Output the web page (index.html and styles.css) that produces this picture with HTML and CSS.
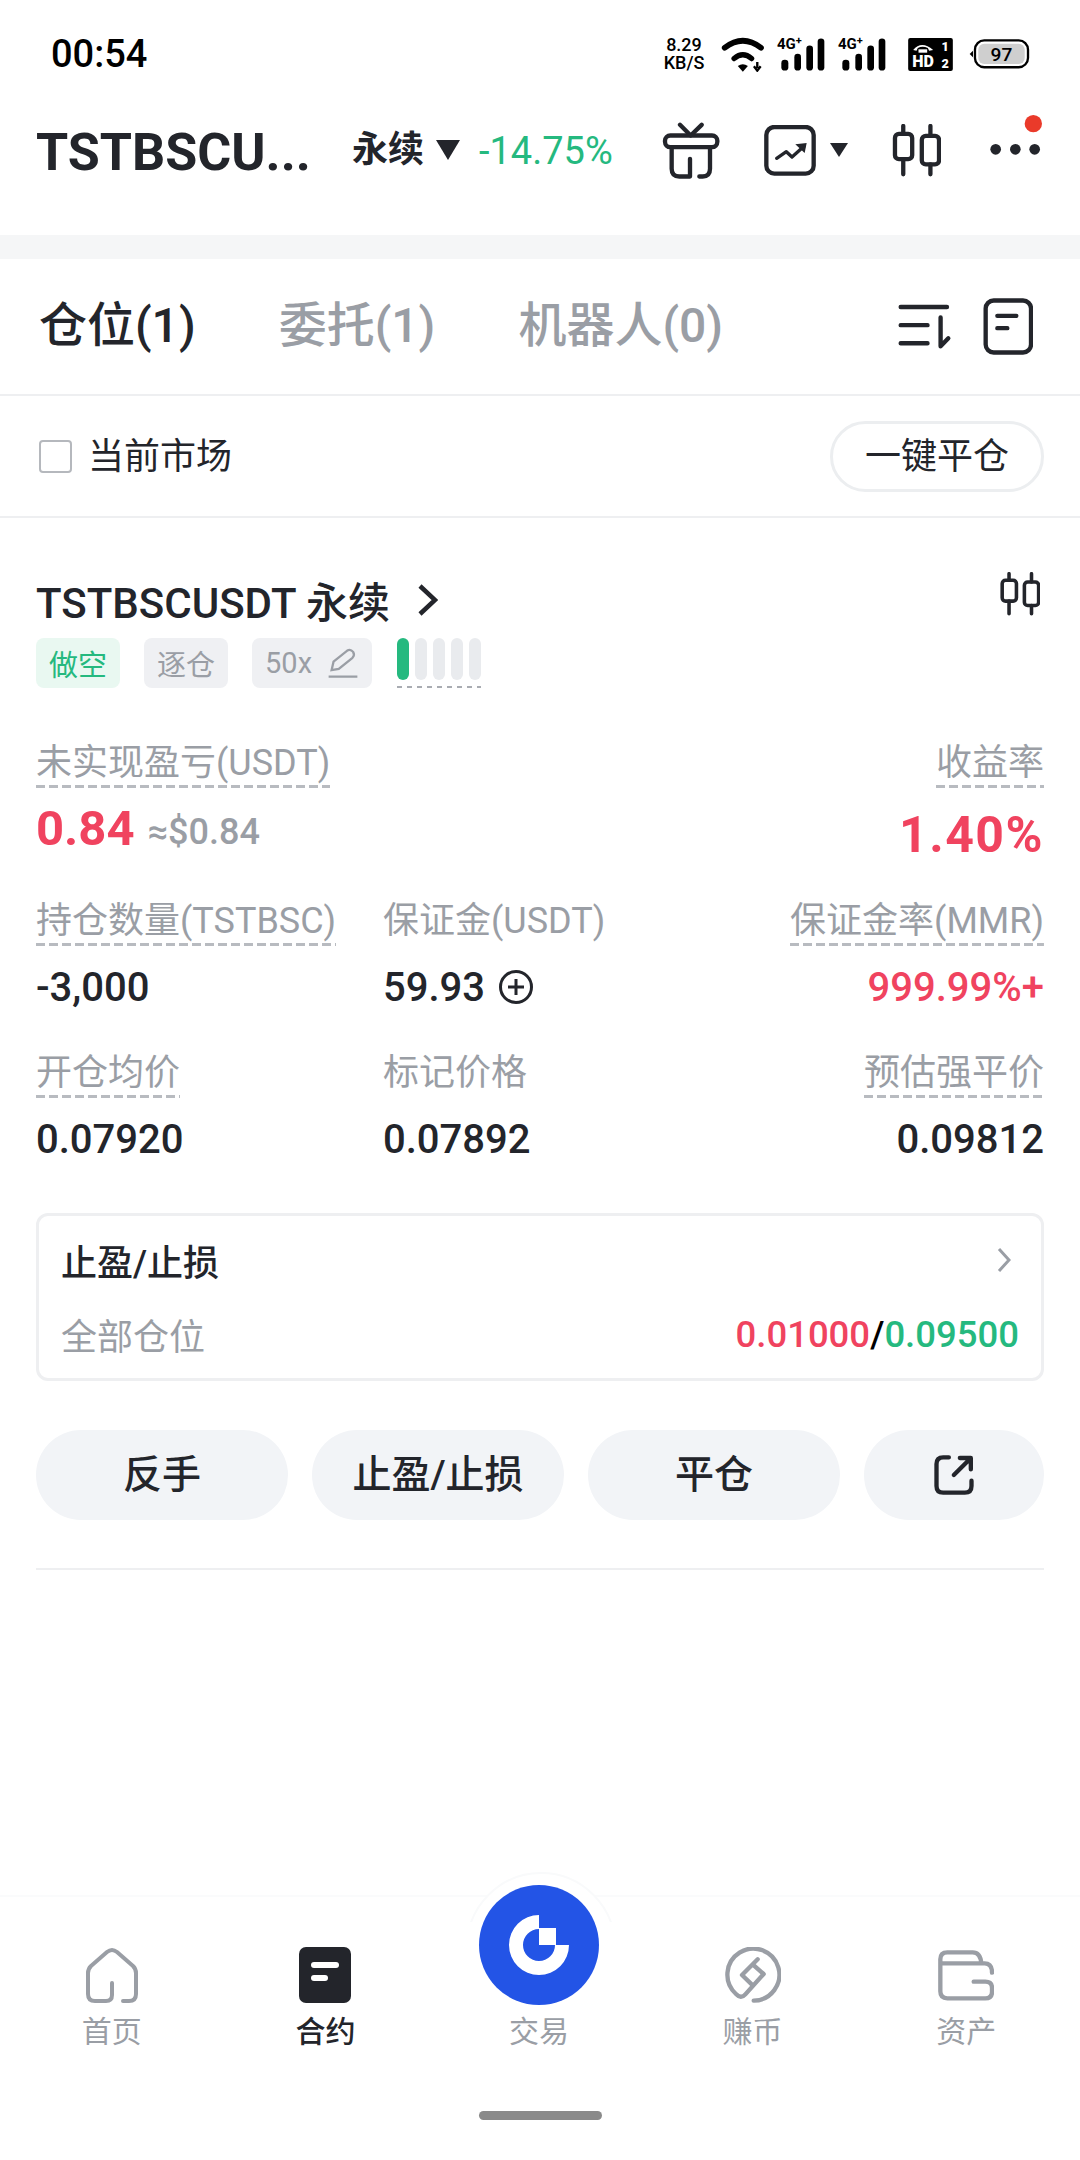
FILE: index.html
```html
<!DOCTYPE html>
<html lang="zh-CN">
<head>
  <meta charset="UTF-8">
  <meta name="viewport" content="width=device-width, initial-scale=1.0">
  <title>合约仓位</title>
  <link rel="stylesheet" href="styles.css">
</head>
<body>
  <div class="status-bar">
    <span class="clock">00:54</span>
    <div class="status-icons">
      <div class="net-speed"><span>8.29</span><span>KB/S</span></div>
      <svg class="ic-wifi" viewBox="245 20 128 104">
        <path d="M256 52 Q310 10 364 52" fill="none" stroke="#000" stroke-width="17" stroke-linecap="round"/>
        <path d="M284 84 Q310 62 336 84" fill="none" stroke="#000" stroke-width="16" stroke-linecap="round"/>
        <path d="M295 106 Q310 96 325 106 L310 123 Z" fill="#000"/>
        <path d="M353 94 V112 M343 107 L353 120 L363 107" fill="none" stroke="#000" stroke-width="7"/>
      </svg>
      <div class="signal">
        <span class="sig-text">4G<sup>+</sup></span>
        <svg class="ic-bars" viewBox="410 20 144 104">
          <rect x="423" y="88" width="21" height="32" rx="10"/>
          <rect x="462" y="70" width="20" height="50" rx="10"/>
          <rect x="498" y="45" width="20" height="75" rx="10"/>
          <rect x="532" y="24" width="20" height="96" rx="10"/>
        </svg>
      </div>
      <div class="signal">
        <span class="sig-text">4G<sup>+</sup></span>
        <svg class="ic-bars" viewBox="410 20 144 104">
          <rect x="423" y="88" width="21" height="32" rx="10"/>
          <rect x="462" y="70" width="20" height="50" rx="10"/>
          <rect x="498" y="45" width="20" height="75" rx="10"/>
          <rect x="532" y="24" width="20" height="96" rx="10"/>
        </svg>
      </div>
      <svg class="ic-hd" viewBox="805 22 134 99">
        <rect x="805" y="22" width="134" height="99" rx="6" fill="#000"/>
        <path d="M820 58 Q845 28 880 58 L868 60 L864 52 Q848 44 834 52 L830 60 Z" fill="#fff"/>
        <rect x="836" y="56" width="26" height="10" fill="#fff"/>
        <text x="817" y="110" class="hd-text">HD</text>
        <text x="905" y="62" class="hd-num">1</text>
        <text x="905" y="112" class="hd-num">2</text>
      </svg>
      <svg class="ic-battery" viewBox="988 24 184 96">
        <path d="M990 72 L1000 62 V82 Z" fill="#000"/>
        <rect x="1006" y="31" width="160" height="81" rx="28" fill="#fff" stroke="#000" stroke-width="7"/>
        <rect x="1016" y="41" width="140" height="61" rx="18" fill="#cfcfcf"/>
        <text x="1086" y="92" text-anchor="middle" class="bat-text">97</text>
      </svg>
    </div>
  </div>

  <header class="top-bar">
    <div class="pair-name">TSTBSCU...</div>
    <span class="pair-type">永续</span>
    <svg class="caret-big" viewBox="0 0 26 20"><path d="M1 0 H25 L13 20 Z"/></svg>
    <span class="pair-change">-14.75%</span>
    <div class="top-actions">
      <svg class="ic-gift" viewBox="66 272 174 170">
        <path d="M120 280 L152 312 L185 280" class="line"/>
        <rect x="75" y="312" width="157" height="35" rx="16" class="line"/>
        <path d="M95 350 V412 Q95 435 118 435 H150 V382 M210 350 V412 Q210 435 188 435 H178" class="line"/>
      </svg>
      <svg class="ic-chart" viewBox="378 282 156 153">
        <rect x="385" y="288" width="142" height="140" rx="24" class="line"/>
        <path d="M416 382 L445 362 L462 378 L498 346" class="line thin"/>
        <path d="M472 340 L506 336 L500 366 Z" fill="#23252b"/>
      </svg>
      <svg class="caret-small" viewBox="0 0 18 14"><path d="M0 0 H18 L9 14 Z"/></svg>
      <svg class="ic-candles" viewBox="760 280 146 160">
        <path d="M793 286 V310 M793 386 V432 M875 286 V316 M875 402 V432" class="line"/>
        <rect x="768" y="310" width="52" height="76" rx="12" class="line"/>
        <rect x="849" y="316" width="52" height="86" rx="12" class="line"/>
      </svg>
      <svg class="ic-more" viewBox="1040 255 165 210">
        <circle cx="1063" cy="358" r="16" fill="#23252b"/>
        <circle cx="1122" cy="358" r="16" fill="#23252b"/>
        <circle cx="1180" cy="358" r="16" fill="#23252b"/>
        <circle cx="1176" cy="281" r="26" fill="#ea3a2a"/>
      </svg>
    </div>
  </header>

  <div class="strip"></div>

  <nav class="tabs">
    <span class="tab active">仓位(1)</span>
    <span class="tab">委托(1)</span>
    <span class="tab">机器人(0)</span>
    <div class="tab-icons">
      <svg class="ic-sort" viewBox="52 76 164 134">
        <path d="M63 85 H201 M63 139 H143 M63 193 H143 M182 116 V202 L205 178" class="line"/>
      </svg>
      <svg class="ic-note" viewBox="308 54 150 170">
        <rect x="316" y="61" width="136" height="156" rx="24" class="line"/>
        <path d="M351 107 H408 M351 144 H381" class="line"/>
      </svg>
    </div>
  </nav>

  <div class="filter-row">
    <label class="market-check"><span class="checkbox"></span><span class="market-text">当前市场</span></label>
    <button class="close-all">一键平仓</button>
  </div>

  <section class="position">
    <div class="pos-head">
      <div class="pos-title">
        <span>TSTBSCUSDT 永续</span>
        <svg class="ic-chevron" viewBox="0 0 20 32"><path d="M2 2 L17 16 L2 30"/></svg>
      </div>
      <svg class="ic-candles-small" viewBox="760 280 146 160">
        <path d="M793 286 V310 M793 386 V432 M875 286 V316 M875 402 V432" class="line"/>
        <rect x="768" y="310" width="52" height="76" rx="12" class="line"/>
        <rect x="849" y="316" width="52" height="86" rx="12" class="line"/>
      </svg>
    </div>

    <div class="tags">
      <span class="tag tag-short">做空</span>
      <span class="tag">逐仓</span>
      <span class="tag tag-lev">50x
        <svg class="ic-pen" viewBox="920 228 98 96">
          <path d="M934 298 L940 272 L982 238 Q992 232 1000 242 Q1006 252 998 260 L956 294 Z M925 318 H1013" fill="none" stroke="#9a9ea5" stroke-width="7"/>
        </svg>
      </span>
      <div class="risk">
        <span class="on"></span><span></span><span></span><span></span><span></span>
      </div>
    </div>

    <div class="metrics">
      <div class="metric">
        <span class="label dashed">未实现盈亏(USDT)</span>
        <div class="pnl"><b class="big red">0.84</b><span class="approx">≈$0.84</span></div>
      </div>
      <div></div>
      <div class="metric right">
        <span class="label dashed">收益率</span>
        <b class="big red roe">1.40%</b>
      </div>

      <div class="metric">
        <span class="label dashed">持仓数量(TSTBSC)</span>
        <span class="value">-3,000</span>
      </div>
      <div class="metric">
        <span class="label">保证金(USDT)</span>
        <span class="value">59.93
          <svg class="ic-plus" viewBox="0 0 34 34"><circle cx="17" cy="17" r="15.5"/><path d="M17 9 V25 M9 17 H25"/></svg>
        </span>
      </div>
      <div class="metric right">
        <span class="label dashed">保证金率(MMR)</span>
        <span class="value red">999.99%+</span>
      </div>

      <div class="metric">
        <span class="label dashed">开仓均价</span>
        <span class="value">0.07920</span>
      </div>
      <div class="metric">
        <span class="label">标记价格</span>
        <span class="value">0.07892</span>
      </div>
      <div class="metric right">
        <span class="label dashed">预估强平价</span>
        <span class="value">0.09812</span>
      </div>
    </div>

    <div class="tpsl">
      <div class="tpsl-row">
        <span class="tpsl-title">止盈/止损</span>
        <svg class="ic-chevron-gray" viewBox="0 0 14 24"><path d="M2 1 L12 12 L2 23"/></svg>
      </div>
      <div class="tpsl-row">
        <span class="tpsl-sub">全部仓位</span>
        <span class="tpsl-vals"><span class="red">0.01000</span>/<span class="green">0.09500</span></span>
      </div>
    </div>

    <div class="actions">
      <button class="act">反手</button>
      <button class="act">止盈/止损</button>
      <button class="act">平仓</button>
      <button class="act act-share">
        <svg class="ic-share" viewBox="160 42 125 126">
          <path d="M207 52 H190 Q170 52 170 72 V138 Q170 158 190 158 H255 Q275 158 275 138 V122 M222 105 L268 59 M240 54 H273 V88" class="line"/>
        </svg>
      </button>
    </div>
  </section>

  <div class="divider"></div>

  <footer class="bottom-nav">
    <div class="nav-row">
      <div class="nav-item">
        <svg class="nav-icon" viewBox="-2 -2 56 56">
          <path d="M26 34 V46 Q26 52 20 52 H9 Q2 52 2 45 V24 Q2 20 5 17 L21 3 Q26 -1 31 3 L47 17 Q50 20 50 24 V45 Q50 52 43 52 H37" class="gray-line"/>
        </svg>
        <span>首页</span>
      </div>
      <div class="nav-item active">
        <svg class="nav-icon" viewBox="0 0 52 56">
          <rect width="52" height="56" rx="7" fill="#23252b"/>
          <rect x="12" y="15" width="28" height="6" rx="3" fill="#fff"/>
          <rect x="12" y="28" width="17" height="6" rx="3" fill="#fff"/>
        </svg>
        <span>合约</span>
      </div>
      <div class="nav-item">
        <div class="trade-btn">
          <svg viewBox="-60 -60 120 120">
            <path d="M0 -30 A30 30 0 1 0 30 0 H16 A16 16 0 1 1 0 -16 Z" fill="#fff"/>
            <rect x="0" y="-17" width="17" height="17" fill="#fff"/>
          </svg>
        </div>
        <span>交易</span>
      </div>
      <div class="nav-item">
        <svg class="nav-icon" viewBox="74 51 168 168">
          <path d="M160 212 A78 78 0 1 0 107 192 Q122 208 135 193 L190 132 L157 103 M158 167 L125 135 L172 88" class="gray-line thick"/>
        </svg>
        <span>赚币</span>
      </div>
      <div class="nav-item">
        <svg class="nav-icon" viewBox="718 51 168 168">
          <path d="M725 100 V88 Q725 67 746 67 H822 Q845 67 848 100 M725 100 H858 Q880 100 880 128 M725 100 V184 Q725 205 746 205 H860 Q880 205 880 186 V174 Q880 155 860 155 H825" class="gray-line thick"/>
        </svg>
        <span>资产</span>
      </div>
    </div>
    <div class="home-bar"></div>
  </footer>
</body>
</html>
```

FILE: styles.css
```css
* {
  box-sizing: border-box;
}

body {
  margin: 0;
  width: 1080px;
  height: 2160px;
  display: flex;
  flex-direction: column;
  background: #fff;
  color: #23252b;
  font-family: Roboto, "Noto Sans CJK SC", sans-serif;
  overflow: hidden;
}

svg {
  display: block;
  flex: none;
}

.line {
  fill: none;
  stroke: #23252b;
  stroke-width: 13;
  stroke-linecap: round;
  stroke-linejoin: round;
}

.line.thin {
  stroke-width: 10;
}

.red {
  color: #f0435f;
}

.green {
  color: #25b97f;
}

/* status bar */
.status-bar {
  height: 108px;
  padding: 0 50px 0 51px;
  display: flex;
  justify-content: space-between;
  align-items: center;
}

.clock {
  font-weight: 500;
  font-size: 38px;
  color: #000;
}

.status-icons {
  display: flex;
  align-items: center;
  height: 40px;
}

.net-speed {
  width: 44px;
  display: flex;
  flex-direction: column;
  align-items: center;
  font-weight: 500;
  font-size: 18px;
  line-height: 18px;
  color: #000;
}

.ic-wifi {
  width: 43px;
  height: 35px;
  margin-left: 15px;
}

.signal {
  position: relative;
  width: 48px;
  height: 35px;
  margin-left: 13px;
}

.ic-bars {
  width: 48px;
  height: 35px;
}

.sig-text {
  position: absolute;
  left: 0;
  top: 0;
  font-weight: 700;
  font-size: 15px;
  line-height: 15px;
  color: #000;
}

.sig-text sup {
  font-size: 11px;
  line-height: 0;
  vertical-align: 5px;
}

.ic-hd {
  width: 45px;
  height: 33px;
  margin-left: 22px;
}

.hd-text,
.hd-num {
  fill: #fff;
  font-weight: 900;
  font-size: 48px;
}

.hd-num {
  font-size: 38px;
}

.ic-battery {
  width: 61px;
  height: 32px;
  margin-left: 16px;
}

.bat-text {
  font-weight: 500;
  font-size: 58px;
}

/* top bar */
.top-bar {
  height: 84px;
  margin-bottom: 43px;
  padding-left: 36px;
  display: flex;
  align-items: center;
}

.pair-name {
  width: 280px;
  padding-top: 4px;
  font-size: 52px;
  font-weight: 700;
  white-space: nowrap;
}

.pair-type {
  margin-left: 36px;
  padding-bottom: 8px;
  font-size: 36px;
  font-weight: 700;
}

.caret-big {
  width: 26px;
  height: 20px;
  margin-left: 11px;
  fill: #23252b;
}

.pair-change {
  margin-left: 18px;
  padding-top: 2px;
  font-size: 38px;
  color: #25b97f;
}

.top-actions {
  margin-left: auto;
  display: flex;
  align-items: center;
  padding-right: 37px;
}

.ic-gift {
  width: 58px;
  height: 57px;
}

.ic-chart {
  width: 52px;
  height: 51px;
  margin-left: 44px;
}

.caret-small {
  width: 18px;
  height: 14px;
  margin-left: 14px;
  fill: #23252b;
}

.ic-candles {
  width: 49px;
  height: 53px;
  margin-left: 44px;
}

.ic-more {
  width: 55px;
  height: 70px;
  margin-left: 47px;
}

.strip {
  height: 24px;
  background: #f5f6f7;
}

/* tabs */
.tabs {
  height: 137px;
  padding: 0 47px 11px 39px;
  display: flex;
  align-items: center;
  gap: 83px;
  border-bottom: 2px solid #eeeff1;
}

.tab {
  font-size: 48px;
  font-weight: 500;
  color: #9a9ea5;
}

.tab.active {
  color: #23252b;
}

.tab-icons {
  margin-left: auto;
  margin-top: 10px;
  display: flex;
  align-items: center;
  gap: 31px;
}

.ic-sort {
  width: 55px;
  height: 45px;
}

.ic-note {
  width: 50px;
  height: 57px;
}

/* filter */
.filter-row {
  height: 122px;
  padding: 0 36px 0 39px;
  display: flex;
  justify-content: space-between;
  align-items: center;
  border-bottom: 2px solid #eeeff1;
}

.market-check {
  display: flex;
  align-items: center;
  gap: 16px;
  font-size: 36px;
}

.market-text {
  padding-bottom: 6px;
}

.checkbox {
  width: 33px;
  height: 33px;
  border: 2px solid #b5b8bd;
  border-radius: 4px;
}

.close-all {
  width: 214px;
  height: 71px;
  padding: 0 0 6px;
  background: #fff;
  border: 3px solid #eceef0;
  border-radius: 36px;
  color: #23252b;
  font-family: inherit;
  font-size: 36px;
}

/* position card */
.position {
  padding: 56px 36px 0;
}

.pos-head {
  display: flex;
  justify-content: space-between;
  align-items: flex-start;
}

.pos-title {
  display: flex;
  align-items: center;
  height: 56px;
  padding-bottom: 5px;
  font-size: 42px;
  font-weight: 500;
}

.ic-chevron {
  width: 20px;
  height: 32px;
  margin-left: 28px;
  fill: none;
  stroke: #23252b;
  stroke-width: 4.5;
}

.ic-candles-small {
  width: 40px;
  height: 44px;
  margin: -2px 4px 0 0;
}

.tags {
  margin-top: 8px;
  display: flex;
  align-items: flex-start;
  gap: 24px;
}

.tag {
  height: 50px;
  padding: 0 13px;
  display: flex;
  align-items: center;
  gap: 15px;
  border-radius: 8px;
  background: #eff0f3;
  color: #9a9ea5;
  font-size: 29px;
}

.tag-short {
  background: #e9f8f1;
  color: #25b97f;
}

.ic-pen {
  width: 32px;
  height: 32px;
}

.risk {
  height: 50px;
  margin-left: 1px;
  display: flex;
  align-items: flex-start;
  gap: 6px;
  background: repeating-linear-gradient(90deg, #a9acb2 0 5px, transparent 5px 10px) bottom / 100% 2px no-repeat;
}

.risk span {
  width: 12px;
  height: 42px;
  border-radius: 6px;
  background: #e9ebee;
}

.risk .on {
  background: #25b97f;
}

.metrics {
  margin-top: 52px;
  display: grid;
  grid-template-columns: 347px 1fr auto;
  row-gap: 38px;
}

.metric {
  display: flex;
  flex-direction: column;
  align-items: flex-start;
}

.metric.right {
  align-items: flex-end;
}

.label {
  height: 48px;
  line-height: 46px;
  font-size: 36px;
  color: #9a9ea5;
  white-space: nowrap;
}

.dashed {
  background: repeating-linear-gradient(90deg, #b8bbc0 0 9px, transparent 9px 13px) bottom / 100% 3px no-repeat;
}

.pnl {
  margin-top: 16px;
  height: 50px;
  display: flex;
  align-items: center;
  gap: 13px;
}

.big {
  font-size: 49px;
  font-weight: 700;
  line-height: 50px;
}

.roe {
  margin-top: 22px;
  font-size: 50px;
  letter-spacing: 1.5px;
}

.approx {
  margin-top: 6px;
  font-size: 36px;
  font-weight: 500;
  color: #9a9ea5;
}

.value {
  margin-top: 16px;
  height: 50px;
  display: flex;
  align-items: center;
  gap: 14px;
  font-size: 40px;
  font-weight: 500;
  white-space: nowrap;
}

.ic-plus {
  width: 34px;
  height: 34px;
  fill: none;
  stroke: #23252b;
  stroke-width: 3;
}

.tpsl {
  margin-top: 49px;
  height: 168px;
  padding: 0 22px 0 22px;
  display: flex;
  flex-direction: column;
  justify-content: center;
  gap: 24px;
  border: 3px solid #eeeff1;
  border-radius: 12px;
}

.tpsl-row {
  height: 50px;
  display: flex;
  justify-content: space-between;
  align-items: center;
}

.tpsl-title {
  font-size: 36px;
  font-weight: 500;
}

.tpsl-sub {
  font-size: 36px;
  color: #9a9ea5;
}

.tpsl-vals {
  font-size: 36.5px;
  font-weight: 500;
  color: #000;
}

.ic-chevron-gray {
  width: 14px;
  height: 24px;
  margin-right: 8px;
  fill: none;
  stroke: #9a9ea5;
  stroke-width: 3;
}

.actions {
  margin-top: 49px;
  display: grid;
  grid-template-columns: 252px 252px 252px 1fr;
  gap: 24px;
}

.act {
  height: 90px;
  padding: 0 0 8px;
  border: 0;
  border-radius: 45px;
  background: #f2f4f7;
  color: #23252b;
  font-family: inherit;
  font-size: 39px;
  font-weight: 500;
}

.act-share {
  padding: 0;
  display: flex;
  justify-content: center;
  align-items: center;
}

.ic-share {
  width: 42px;
  height: 42px;
}

.divider {
  height: 2px;
  margin: 48px 36px 0;
  background: #eeeff1;
}

/* bottom nav */
.bottom-nav {
  margin-top: auto;
  height: 265px;
  position: relative;
  border-top: 2px solid #fafbfc;
}

.bottom-nav::before {
  content: "";
  position: absolute;
  left: 466px;
  top: -25px;
  width: 146px;
  height: 146px;
  border-radius: 50%;
  background: #fff;
  border: 2px solid #f9fafb;
  clip-path: inset(0 0 100px 0);
}

.nav-row {
  position: relative;
  margin-top: -12px;
  padding: 0 7px 0 5px;
  display: grid;
  grid-template-columns: repeat(5, 1fr);
  align-items: end;
}

.nav-item {
  display: flex;
  flex-direction: column;
  align-items: center;
  font-size: 30px;
  line-height: 40px;
  color: #9a9ea5;
}

.nav-item.active {
  color: #23252b;
  font-weight: 500;
}

.nav-icon {
  width: 56px;
  height: 56px;
  margin-bottom: 9px;
}

.gray-line {
  fill: none;
  stroke: #9a9ea5;
  stroke-width: 4;
  stroke-linecap: round;
  stroke-linejoin: round;
}

.gray-line.thick {
  stroke-width: 13;
}

.trade-btn {
  width: 120px;
  height: 120px;
  margin-bottom: 7px;
  border-radius: 50%;
  background: #2354e6;
}

.home-bar {
  width: 123px;
  height: 9px;
  margin: 59px auto 0;
  border-radius: 5px;
  background: #8a8a8a;
}
```
